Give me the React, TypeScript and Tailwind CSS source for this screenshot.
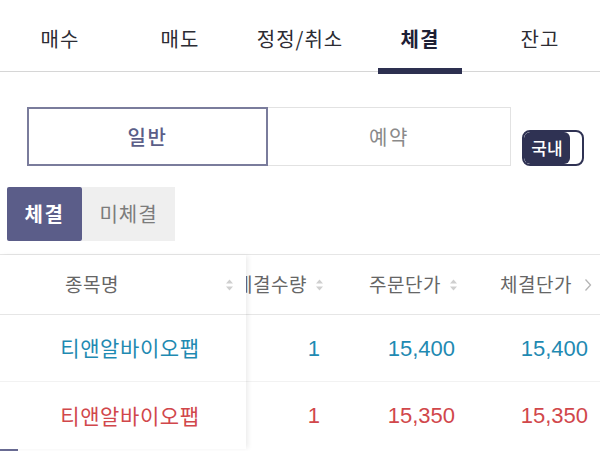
import React from "react";

const KR = { fontFamily: '"Noto Sans CJK KR", "Noto Sans", sans-serif' };
const NUM = { fontFamily: '"Liberation Sans", Arial, sans-serif' };

function SortIcon() {
  return (
    <svg width="9" height="14" viewBox="0 0 9 14" className="shrink-0">
      <path d="M4.5 1.5 L8 5.5 H1 Z" fill="#cfcfcf" />
      <path d="M4.5 12.5 L8 8.5 H1 Z" fill="#cfcfcf" />
    </svg>
  );
}

const tabs = ["매수", "매도", "정정/취소", "체결", "잔고"];

const rows = [
  { name: "티앤알바이오팹", qty: "1", order: "15,400", exec: "15,400", color: "text-[#1f8ab2]" },
  { name: "티앤알바이오팹", qty: "1", order: "15,350", exec: "15,350", color: "text-[#d1474b]" },
];

export default function App() {
  return (
    <div className="relative w-[600px] h-[451px] overflow-hidden bg-white" style={KR}>
      {/* Top tabs */}
      <div className="flex h-[72px] border-b border-[#d6d6d6]">
        {tabs.map((t, i) => (
          <div
            key={t}
            className={`relative w-[120px] flex items-center justify-center pt-[7px] text-[20px] tracking-[1px] ${
              i === 3 ? "font-bold text-[#1e2035]" : "text-[#2c2c33]"
            }`}
          >
            {t}
            {i === 3 && (
              <span className="absolute left-1/2 -translate-x-1/2 bottom-[-3px] w-[84px] h-[6px] bg-[#2d3050]" />
            )}
          </div>
        ))}
      </div>

      {/* Segment */}
      <div className="mt-[35px] pl-[27px] flex items-end">
        <div className="flex w-[484px] h-[59px]">
          <div className="w-[241px] border-2 border-[#7a7c9c] flex items-center justify-center text-[20px] tracking-[1.5px] font-medium text-[#5b5e88]">
            일반
          </div>
          <div className="flex-1 border border-l-0 border-[#e2e2e2] flex items-center justify-center text-[20px] tracking-[1.5px] text-[#8a8a8a]">
            예약
          </div>
        </div>
        <div className="ml-[11px] w-[62px] h-[36px] rounded-[8px] border-2 border-[#2f3253] bg-white flex overflow-hidden">
          <div className="w-[46px] h-full bg-[#2f3253] rounded-[6px] flex items-center justify-center text-white text-[17px] font-medium">
            국내
          </div>
        </div>
      </div>

      {/* 체결 / 미체결 */}
      <div className="mt-[21px] pl-[7px] flex">
        <div className="w-[75px] h-[54px] bg-[#5b5d89] rounded-[2px] flex items-center justify-center text-white text-[20px] tracking-[1.5px] font-bold">
          체결
        </div>
        <div className="w-[93px] h-[54px] bg-[#efefef] flex items-center justify-center text-[#7c7c7c] text-[20px] tracking-[1px]">
          미체결
        </div>
      </div>

      {/* Table */}
      <div className="mt-[13px] border-t border-[#e6e6e6] flex">
        {/* fixed column */}
        <div className="relative z-10 w-[246px] shrink-0 bg-white shadow-[3px_0_5px_-1px_rgba(0,0,0,0.08)]">
          <div className="h-[60px] border-b border-[#e6e6e6] flex items-center">
            <div className="w-[184px] text-center text-[19px] tracking-[0.5px] text-[#666]">종목명</div>
            <div className="ml-auto mr-[12px]">
              <SortIcon />
            </div>
          </div>
          {rows.map((r, i) => (
            <div
              key={i}
              className={`h-[67px] flex items-center justify-center pl-[14px] text-[21px] tracking-[0.6px] ${r.color} ${
                i === 0 ? "border-b border-[#f2f2f2]" : ""
              }`}
            >
              {r.name}
            </div>
          ))}
        </div>

        {/* scroll area */}
        <div className="flex-1 overflow-hidden">
          <div className="ml-[-52px] w-[420px]">
            <div className="h-[60px] border-b border-[#e6e6e6] flex">
              <div className="w-[134px] flex items-center justify-end gap-[8px] pr-[4px] text-[19px] tracking-[0.5px] text-[#666] whitespace-nowrap">
                체결수량 <SortIcon />
              </div>
              <div className="w-[134px] flex items-center justify-end gap-[8px] pr-[4px] text-[19px] tracking-[0.5px] text-[#666] whitespace-nowrap">
                주문단가 <SortIcon />
              </div>
              <div className="w-[134px] flex items-center justify-end gap-[12px] pr-[4px] text-[19px] tracking-[0.5px] text-[#666] whitespace-nowrap">
                체결단가
                <svg width="8" height="14" viewBox="0 0 8 14" className="shrink-0">
                  <path d="M1.5 1.5 L6.5 7 L1.5 12.5" fill="none" stroke="#b5b5b5" strokeWidth="1.3" />
                </svg>
              </div>
            </div>
            {rows.map((r, i) => (
              <div
                key={i}
                className={`h-[67px] flex text-[22px] ${r.color} ${i === 0 ? "border-b border-[#f2f2f2]" : ""}`}
                style={NUM}
              >
                <div className="w-[134px] flex items-center justify-end pr-[8px]">{r.qty}</div>
                <div className="w-[134px] flex items-center justify-end pr-[7px]">{r.order}</div>
                <div className="w-[134px] flex items-center justify-end pr-[8px]">{r.exec}</div>
              </div>
            ))}
          </div>
        </div>
      </div>

      {/* floating corner button */}
      <div className="absolute left-0 top-[443px] w-[18px] h-[20px] bg-[#6a6c94] rounded-tr-[3px]" />
    </div>
  );
}
